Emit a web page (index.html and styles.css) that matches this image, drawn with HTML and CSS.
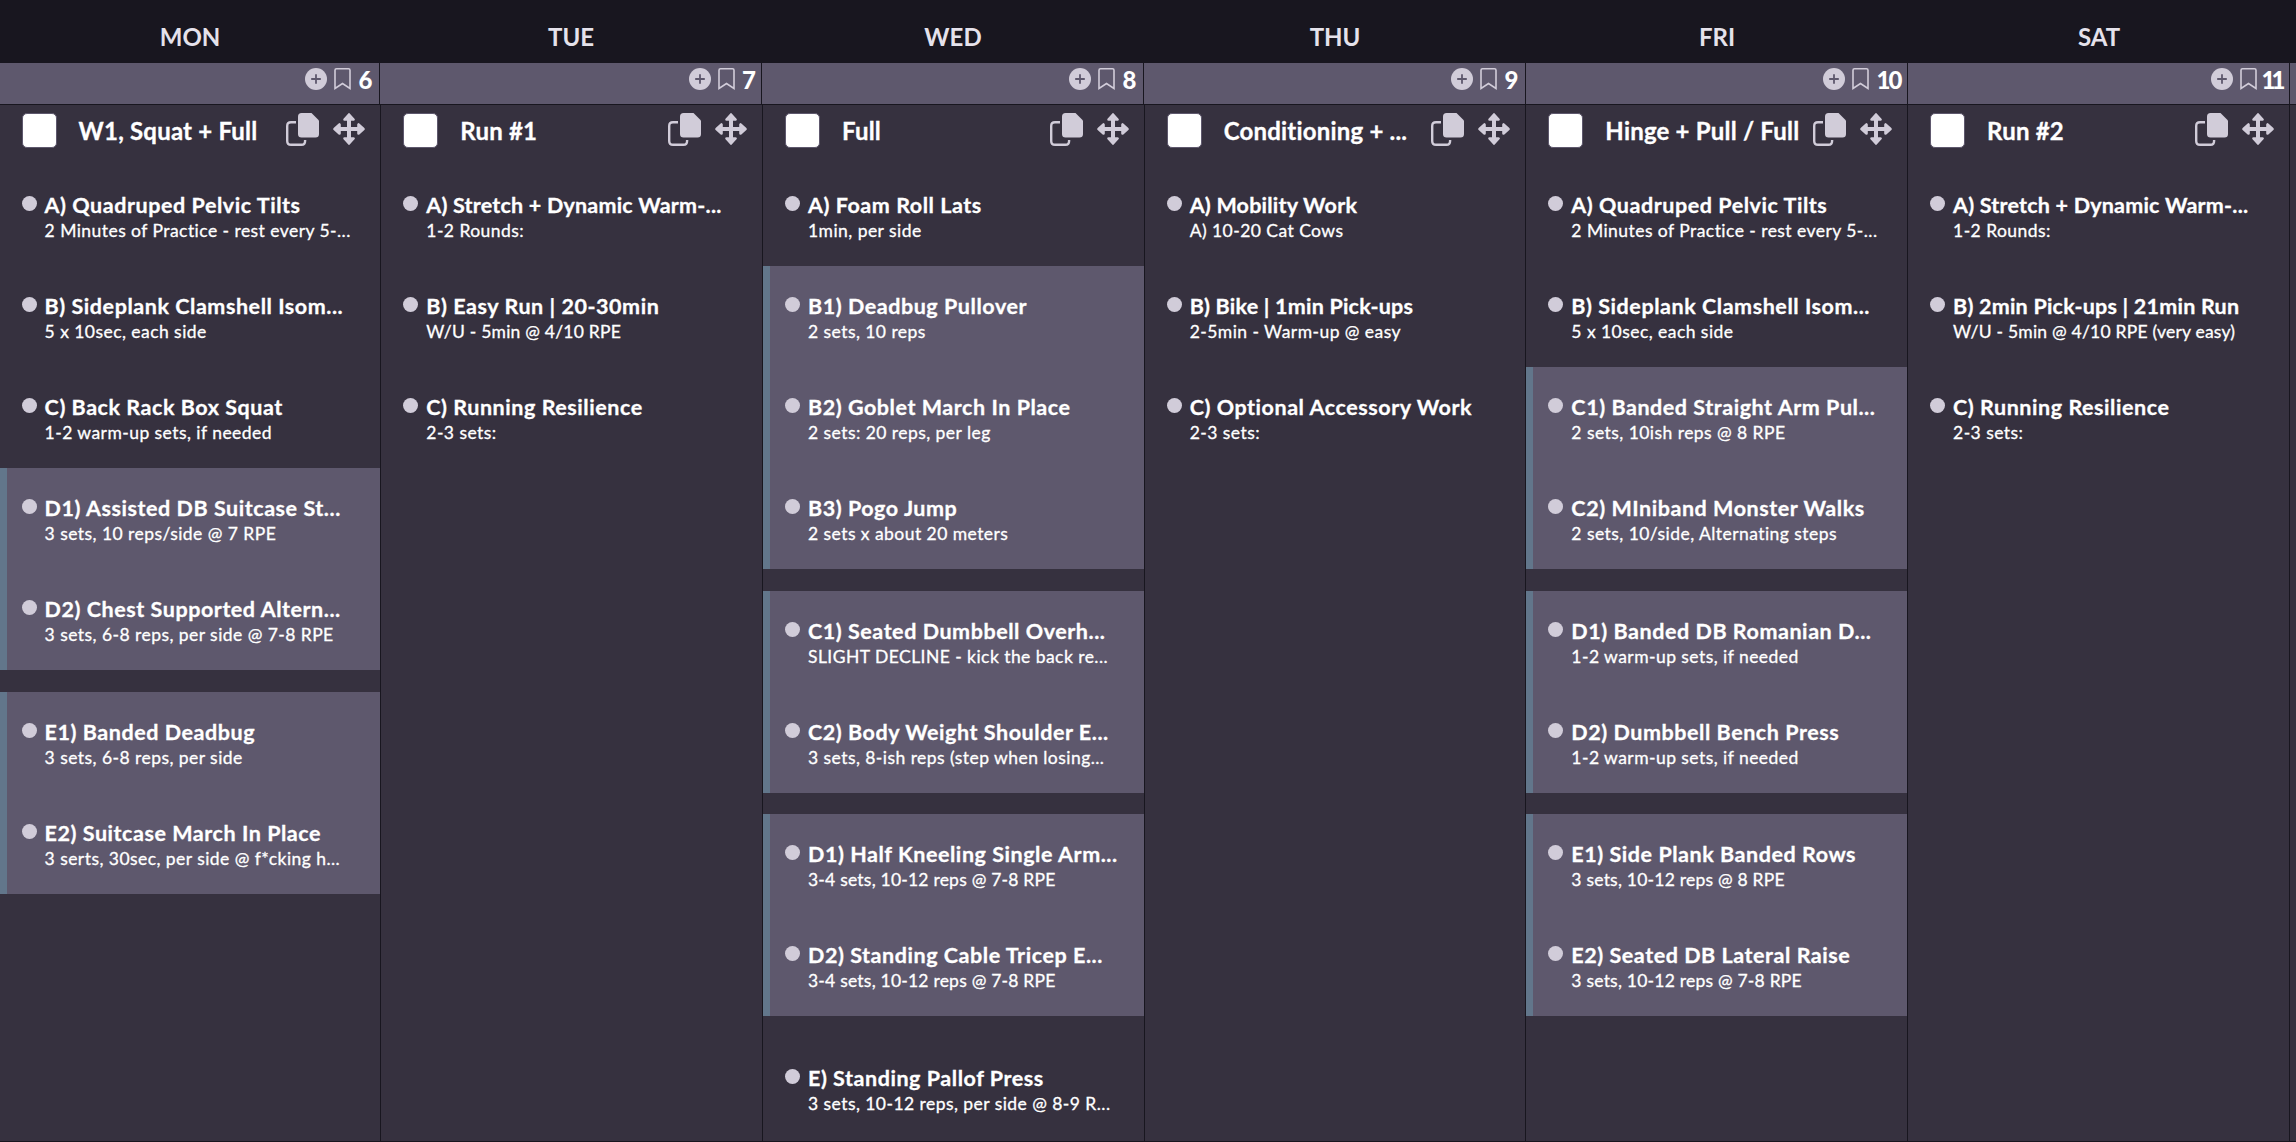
FILE: index.html
```
<!DOCTYPE html>
<html lang="en">
<head>
  <meta charset="utf-8">
  <title>Training Calendar</title>
  <link rel="stylesheet" href="styles.css">
</head>
<body>
  <svg class="sprite" aria-hidden="true">
    <symbol id="plus" viewBox="0 0 22 22">
      <circle cx="11" cy="11" r="11" fill="currentColor"/>
      <path d="M11 6.2v9.6M6.2 11h9.6" stroke="#5e586d" stroke-width="1.8"/>
    </symbol>
    <symbol id="bookmark" viewBox="0 0 17 22">
      <path d="M1 20.5V2.3Q1 .8 2.5 .8h12Q16 .8 16 2.3v18.2l-7.5-5z" fill="none" stroke="currentColor" stroke-width="1.6"/>
    </symbol>
    <symbol id="copy" viewBox="0 0 33 33">
      <path d="M10 9.2H5Q1.2 9.2 1.2 13v15Q1.2 31.8 5 31.8h10.5q3.6 0 3.6-3.8v-1" fill="none" stroke="currentColor" stroke-width="2.4"/>
      <path d="M15.500 0H25.500L33 7.500V21Q33 24.500 29.500 24.500H15.500Q12 24.500 12 21V3.500Q12 0 15.500 0z" fill="currentColor"/>
    </symbol>
    <symbol id="move" viewBox="0 0 32 32">
      <path d="M16 6v20M6 16h20" stroke="currentColor" stroke-width="4"/>
      <path d="M16 1.500L20.500 6.500H11.500zM16 30.500L20.500 25.500H11.500zM1.500 16L6.500 11.500V20.500zM30.500 16L25.500 11.500V20.500z" fill="currentColor" stroke="currentColor" stroke-width="2.600" stroke-linejoin="round"/>
    </symbol>
  </svg>

  <div class="weekdays">
    <div>MON</div><div>TUE</div><div>WED</div><div>THU</div><div>FRI</div><div>SAT</div><div></div>
  </div>

  <div class="dates">
    <div class="date"><svg class="plus"><use href="#plus"/></svg><svg class="bookmark"><use href="#bookmark"/></svg><span>6</span></div>
    <div class="date"><svg class="plus"><use href="#plus"/></svg><svg class="bookmark"><use href="#bookmark"/></svg><span class="seven">7</span></div>
    <div class="date"><svg class="plus"><use href="#plus"/></svg><svg class="bookmark"><use href="#bookmark"/></svg><span>8</span></div>
    <div class="date"><svg class="plus"><use href="#plus"/></svg><svg class="bookmark"><use href="#bookmark"/></svg><span>9</span></div>
    <div class="date"><svg class="plus"><use href="#plus"/></svg><svg class="bookmark"><use href="#bookmark"/></svg><span class="two">10</span></div>
    <div class="date"><svg class="plus"><use href="#plus"/></svg><svg class="bookmark"><use href="#bookmark"/></svg><span class="two eleven">11</span></div>
    <div class="date"></div>
  </div>

  <div class="week">
    <div class="day">
      <div class="workout"><i class="check"></i><h2>W1, Squat + Full</h2><svg class="copy"><use href="#copy"/></svg><svg class="move"><use href="#move"/></svg></div>
      <div class="item"><h3>A) Quadruped Pelvic Tilts</h3><p>2 Minutes of Practice - rest every 5-...</p></div>
      <div class="item"><h3>B) Sideplank Clamshell Isom...</h3><p>5 x 10sec, each side</p></div>
      <div class="item"><h3>C) Back Rack Box Squat</h3><p>1-2 warm-up sets, if needed</p></div>
      <div class="group">
        <div class="item"><h3>D1) Assisted DB Suitcase St...</h3><p>3 sets, 10 reps/side @ 7 RPE</p></div>
        <div class="item"><h3>D2) Chest Supported Altern...</h3><p>3 sets, 6-8 reps, per side @ 7-8 RPE</p></div>
      </div>
      <div class="group">
        <div class="item"><h3>E1) Banded Deadbug</h3><p>3 sets, 6-8 reps, per side</p></div>
        <div class="item"><h3>E2) Suitcase March In Place</h3><p>3 serts, 30sec, per side @ f*cking h...</p></div>
      </div>
    </div>

    <div class="day">
      <div class="workout"><i class="check"></i><h2>Run #1</h2><svg class="copy"><use href="#copy"/></svg><svg class="move"><use href="#move"/></svg></div>
      <div class="item"><h3 class="snug">A) Stretch + Dynamic Warm-...</h3><p>1-2 Rounds:</p></div>
      <div class="item"><h3>B) Easy Run | 20-30min</h3><p class="snug">W/U - 5min @ 4/10 RPE</p></div>
      <div class="item"><h3>C) Running Resilience</h3><p>2-3 sets:</p></div>
    </div>

    <div class="day">
      <div class="workout"><i class="check"></i><h2>Full</h2><svg class="copy"><use href="#copy"/></svg><svg class="move"><use href="#move"/></svg></div>
      <div class="item"><h3>A) Foam Roll Lats</h3><p>1min, per side</p></div>
      <div class="group">
        <div class="item"><h3>B1) Deadbug Pullover</h3><p>2 sets, 10 reps</p></div>
        <div class="item"><h3>B2) Goblet March In Place</h3><p>2 sets: 20 reps, per leg</p></div>
        <div class="item"><h3>B3) Pogo Jump</h3><p>2 sets x about 20 meters</p></div>
      </div>
      <div class="group">
        <div class="item"><h3>C1) Seated Dumbbell Overh...</h3><p>SLIGHT DECLINE - kick the back re...</p></div>
        <div class="item"><h3>C2) Body Weight Shoulder E...</h3><p>3 sets, 8-ish reps (step when losing...</p></div>
      </div>
      <div class="group">
        <div class="item"><h3>D1) Half Kneeling Single Arm...</h3><p class="snug">3-4 sets, 10-12 reps @ 7-8 RPE</p></div>
        <div class="item"><h3>D2) Standing Cable Tricep E...</h3><p class="snug">3-4 sets, 10-12 reps @ 7-8 RPE</p></div>
      </div>
      <div class="item"><h3>E) Standing Pallof Press</h3><p>3 sets, 10-12 reps, per side @ 8-9 R...</p></div>
    </div>

    <div class="day">
      <div class="workout"><i class="check"></i><h2>Conditioning + ...</h2><svg class="copy"><use href="#copy"/></svg><svg class="move"><use href="#move"/></svg></div>
      <div class="item"><h3 class="snug">A) Mobility Work</h3><p>A) 10-20 Cat Cows</p></div>
      <div class="item"><h3 class="snug">B) Bike | 1min Pick-ups</h3><p>2-5min - Warm-up @ easy</p></div>
      <div class="item"><h3>C) Optional Accessory Work</h3><p>2-3 sets:</p></div>
    </div>

    <div class="day">
      <div class="workout"><i class="check"></i><h2>Hinge + Pull / Full</h2><svg class="copy"><use href="#copy"/></svg><svg class="move"><use href="#move"/></svg></div>
      <div class="item"><h3>A) Quadruped Pelvic Tilts</h3><p>2 Minutes of Practice - rest every 5-...</p></div>
      <div class="item"><h3>B) Sideplank Clamshell Isom...</h3><p>5 x 10sec, each side</p></div>
      <div class="group">
        <div class="item"><h3>C1) Banded Straight Arm Pul...</h3><p>2 sets, 10ish reps @ 8 RPE</p></div>
        <div class="item"><h3>C2) MIniband Monster Walks</h3><p>2 sets, 10/side, Alternating steps</p></div>
      </div>
      <div class="group">
        <div class="item"><h3>D1) Banded DB Romanian D...</h3><p>1-2 warm-up sets, if needed</p></div>
        <div class="item"><h3>D2) Dumbbell Bench Press</h3><p>1-2 warm-up sets, if needed</p></div>
      </div>
      <div class="group">
        <div class="item"><h3>E1) Side Plank Banded Rows</h3><p class="snug">3 sets, 10-12 reps @ 8 RPE</p></div>
        <div class="item"><h3>E2) Seated DB Lateral Raise</h3><p class="snug">3 sets, 10-12 reps @ 7-8 RPE</p></div>
      </div>
    </div>

    <div class="day">
      <div class="workout"><i class="check"></i><h2>Run #2</h2><svg class="copy"><use href="#copy"/></svg><svg class="move"><use href="#move"/></svg></div>
      <div class="item"><h3 class="snug">A) Stretch + Dynamic Warm-...</h3><p>1-2 Rounds:</p></div>
      <div class="item"><h3 class="snug">B) 2min Pick-ups | 21min Run</h3><p class="snug">W/U - 5min @ 4/10 RPE (very easy)</p></div>
      <div class="item"><h3>C) Running Resilience</h3><p>2-3 sets:</p></div>
    </div>

    <div class="day"></div>
  </div>
</body>
</html>
```
FILE: styles.css
```
* {
  box-sizing: border-box;
}
body {
  margin: 0;
  height: 1142px;
  overflow: hidden;
  background: #36313f;
  color: #fff;
  font-family: "Proxima Nova", Lato, sans-serif;
}
h2, h3, p {
  margin: 0;
  white-space: nowrap;
}
.sprite {
  display: none;
}
svg {
  display: block;
  flex: none;
  color: #d1ccd9;
}

.weekdays, .dates {
  display: grid;
  grid-template-columns: 380px repeat(5, 382px) 1fr;
}
.weekdays {
  height: 63px;
  background: #18161f;
  color: #e5e2eb;
  font-size: 24px;
  font-weight: bold;
  line-height: 28px;
  text-align: center;
  padding-top: 23px;
}
.dates {
  height: 42px;
  background: #5e586d;
  border-bottom: 1px solid #18161f;
}
.date {
  display: flex;
  justify-content: flex-end;
  gap: 7px;
  padding: 5px 6px 0 0;
  border-right: 1px solid #18161f;
}
.date:last-child {
  padding: 0;
  border: 0;
}
.date span {
  width: 15px;
  font-size: 24px;
  font-weight: 900;
  line-height: 24px;
  text-align: center;
}
.date .seven {
  width: 13px;
}
.date .two {
  width: 25px;
  letter-spacing: -2px;
}
.date .eleven {
  width: 19px;
  letter-spacing: -4px;
  text-indent: -4px;
}
.plus {
  width: 22px;
  height: 22px;
}
.bookmark {
  width: 17px;
  height: 22px;
}

.week {
  display: grid;
  grid-template-columns: repeat(6, 381.7px) 1fr;
  height: 1037px;
  margin-left: -0.4px;
  border-bottom: 1px solid #18161f;
}
.day {
  border-right: 1px solid #18161f;
}
.day:last-child {
  border: 0;
}
.workout {
  display: flex;
  height: 60px;
  padding: 8px 15px 0 22px;
}
.check {
  flex: none;
  width: 35px;
  height: 35px;
  margin-right: 22px;
  background: #fff;
  border: 1px solid #5e586d;
  border-radius: 5px;
}
.workout h2 {
  flex: 1;
  min-width: 0;
  font-size: 24px;
  line-height: 36px;
  letter-spacing: 0.2px;
  -webkit-text-stroke: 0.3px;
}
.copy {
  width: 33px;
  height: 33px;
  margin-right: 14px;
}
.move {
  width: 32px;
  height: 32px;
}

.item {
  position: relative;
  height: 101px;
  padding: 26px 0 0 45px;
}
.item::before {
  content: "";
  position: absolute;
  left: 22px;
  top: 31px;
  width: 15px;
  height: 15px;
  border-radius: 50%;
  background: #d1ccd9;
}
.item h3 {
  font-size: 21.5px;
  line-height: 28px;
  letter-spacing: 0.55px;
  -webkit-text-stroke: 0.3px;
}
.item p {
  font-size: 17.5px;
  line-height: 24px;
  letter-spacing: 0.45px;
  -webkit-text-stroke: 0.3px;
}
.item .snug {
  letter-spacing: 0.22px;
}
.group {
  background: linear-gradient(90deg, #62768b 7px, #5e586d 7px);
}
.group + .group, .group + .item {
  margin-top: 21.7px;
}
```
